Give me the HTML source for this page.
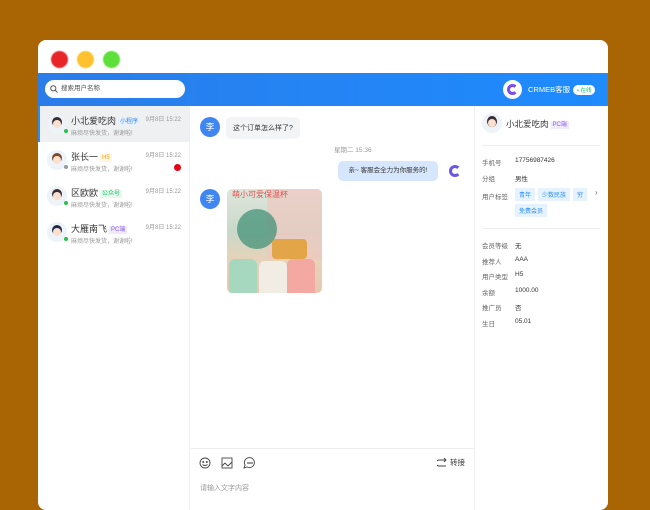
<!DOCTYPE html>
<html><head><meta charset="utf-8"><style>
*{margin:0;padding:0;box-sizing:border-box}
body{width:650px;height:500px;background:#a96503;font-family:"Liberation Sans","Noto Sans CJK SC",sans-serif;position:relative;overflow:hidden;font-size:7px;color:#333}
.win{position:absolute;left:38px;top:40px;width:570px;height:470px;background:#fff;border-radius:8px;overflow:hidden}
.dot{position:absolute;top:11px;width:17px;height:17px;border-radius:50%;filter:blur(.6px)}
.hdr{position:absolute;left:0;top:33px;width:570px;height:33px;background:linear-gradient(90deg,#2a7de9,#1e8bff)}
.search{position:absolute;left:7px;top:7px;width:140px;height:18px;background:#fff;border-radius:9px;font-size:6.5px;color:#555;padding-left:16px;line-height:18px}
.side{position:absolute;left:0;top:66px;width:152px;height:410px;border-right:1px solid #eee}
.item{position:relative;height:36px}
.item.act{background:#eff0f2;border-left:2px solid #2d8cf0}
.av{position:absolute;left:9px;top:8px;width:20px;height:20px;border-radius:50%;background:#eef3fa}
.av i{position:absolute;left:5px;top:3px;width:10px;height:10px;border-radius:50%;background:#3a2f33}
.av b{position:absolute;left:6px;top:6px;width:8px;height:8px;border-radius:50%;background:#fbe0cf}
.av s{position:absolute;right:-1px;bottom:1px;width:4px;height:4px;border-radius:50%;background:#27c24c}
.nm{position:absolute;left:33px;top:8px;font-size:9px;color:#333}
.tg{font-size:6px;padding:1px 2px;margin-left:2px;vertical-align:1px}
.ms{position:absolute;left:33px;top:22px;font-size:6px;color:#999}
.tm{position:absolute;right:8px;top:8px;font-size:6px;color:#999}
.bd{position:absolute;right:8px;top:22px;width:7px;height:7px;border-radius:50%;background:#e60012}
.chat{position:absolute;left:153px;top:66px;width:283px;height:410px}
.li{position:absolute;width:20px;height:20px;border-radius:50%;background:#3f86f3;color:#fff;font-size:9px;text-align:center;line-height:20px}
.right{position:absolute;left:436px;top:66px;width:134px;height:410px;border-left:1px solid #eee}
.row{position:absolute;left:7px;font-size:6.5px;color:#666;width:125px;height:9px}
.row span{position:absolute;left:33px;top:0;color:#333;white-space:nowrap}
.lab{display:inline-block;background:#e6f3ff;color:#2d8cf0;font-size:6px;padding:2px 4px;margin-right:3px;font-style:normal}
</style></head><body>
<div class="win">
<div class="dot" style="left:13px;background:#e8262a"></div>
<div class="dot" style="left:39px;background:#fdc22d"></div>
<div class="dot" style="left:65px;background:#5ee03a"></div>
<div class="hdr">
<div class="search"><svg style="position:absolute;left:5px;top:5px" width="8" height="8" viewBox="0 0 8 8"><circle cx="3.3" cy="3.3" r="2.6" stroke="#555" fill="none"/><path d="M5.3 5.3L7.5 7.5" stroke="#555"/></svg>搜索用户名称</div>
<div style="position:absolute;left:465px;top:7px;width:19px;height:19px;border-radius:50%;background:#fff"><div style="position:absolute;left:4px;top:4px;width:11px;height:11px;border-radius:50%;border:3px solid #7a4dea;border-right-color:transparent"></div></div>
<div style="position:absolute;left:490px;top:11px;color:#fff;font-size:7.5px;white-space:nowrap">CRMEB客服</div>
<div style="position:absolute;left:535px;top:12px;background:#fff;color:#19be6b;font-size:5.5px;border-radius:5px;padding:1px 4px;white-space:nowrap">• 在线</div>
</div>
<div class="side">
<div class="item act"><div class="av" style="left:7px"><i></i><b></b><s></s></div><div class="nm" style="left:31px">小北爱吃肉<span class="tg" style="background:#e6f0ff;color:#2d8cf0">小程序</span></div><div class="ms" style="left:31px">麻烦尽快发货，谢谢啦!</div><div class="tm">9月8日 15:22</div></div>
<div class="item"><div class="av"><i style="background:#7a4a2a"></i><b></b><s style="background:#999"></s></div><div class="nm">张长一<span class="tg" style="background:#fff6e0;color:#f5a623">H5</span></div><div class="ms">麻烦尽快发货，谢谢啦!</div><div class="tm">9月8日 15:22</div><div class="bd"></div></div>
<div class="item"><div class="av"><i></i><b></b><s></s></div><div class="nm">区欧欧<span class="tg" style="background:#e6f9ec;color:#19be6b">公众号</span></div><div class="ms">麻烦尽快发货，谢谢啦!</div><div class="tm">9月8日 15:22</div></div>
<div class="item"><div class="av"><i style="background:#1d2a4a"></i><b></b><s></s></div><div class="nm">大雁南飞<span class="tg" style="background:#f0eaff;color:#8a5cf6">PC端</span></div><div class="ms">麻烦尽快发货，谢谢啦!</div><div class="tm">9月8日 15:22</div></div>
</div>
<div class="chat">
<div class="li" style="left:9px;top:11px">李</div>
<div style="position:absolute;left:35px;top:11px;background:#f3f4f6;border-radius:5px;padding:6px 7px;font-size:7px">这个订单怎么样了?</div>
<div style="position:absolute;left:143px;top:38px;font-size:6.5px;color:#999">星期二 15:36</div>
<div style="position:absolute;left:147px;top:55px;width:100px;height:20px;background:#d6e6fc;border-radius:5px;font-size:6.5px;line-height:20px;text-align:center">亲~ 客服会全力为你服务的!</div>
<div style="position:absolute;left:255px;top:56px;width:18px;height:18px;border-radius:50%;background:#fff"><div style="position:absolute;left:3px;top:3px;width:12px;height:12px;border-radius:50%;border:3px solid #6a56ea;border-right-color:transparent"></div></div>
<div class="li" style="left:9px;top:83px">李</div>
<div style="position:absolute;left:36px;top:83px;width:95px;height:104px;border-radius:5px;overflow:hidden;background:linear-gradient(180deg,#dfe6dc 0%,#c9d9c9 40%,#e8d2b8 70%,#e6c8b0 100%)">
<div style="position:absolute;left:40px;top:0;width:55px;height:70px;background:#f0c8c0;opacity:.7"></div>
<div style="position:absolute;left:10px;top:20px;width:40px;height:40px;background:#3a8d73;border-radius:50%;opacity:.7"></div>
<div style="position:absolute;left:45px;top:50px;width:35px;height:20px;background:#e2a548;border-radius:4px"></div>
<div style="position:absolute;left:2px;top:70px;width:28px;height:34px;background:#a6d8c0;border-radius:6px 6px 0 0"></div>
<div style="position:absolute;left:32px;top:72px;width:28px;height:32px;background:#f1ece4;border-radius:6px 6px 0 0"></div>
<div style="position:absolute;left:60px;top:70px;width:28px;height:34px;background:#f4a8a2;border-radius:6px 6px 0 0"></div>
<div style="position:absolute;left:5px;top:0;font-size:8px;color:#e05050">萌小可爱保温杯</div>
</div>
<div style="position:absolute;left:0;top:342px;width:283px;border-top:1px solid #eee"></div>
<svg style="position:absolute;left:8px;top:351px" width="60" height="12" viewBox="0 0 60 12" fill="none" stroke="#444" stroke-width=".9"><circle cx="6" cy="6" r="5"/><circle cx="4.2" cy="5" r=".5" fill="#444"/><circle cx="7.8" cy="5" r=".5" fill="#444"/><path d="M3.5 7.5Q6 9.5 8.5 7.5"/><rect x="23" y="1" width="10" height="10"/><path d="M23 9L26 6L29 9L33 5"/><path d="M45 11L46 8A5 5 0 1 1 48 10Z"/><circle cx="49" cy="6" r=".4" fill="#444"/><circle cx="51" cy="6" r=".4" fill="#444"/><circle cx="53" cy="6" r=".4" fill="#444"/></svg>
<svg style="position:absolute;left:246px;top:352px" width="10" height="10" viewBox="0 0 10 10" fill="none" stroke="#444" stroke-width=".9"><path d="M9 2H2A1.5 1.5 0 0 0 2 8H9M7 0L9 2L7 4"/></svg>
<div style="position:absolute;left:259px;top:351px;font-size:7.5px">转接</div>
<div style="position:absolute;left:9px;top:377px;font-size:7px;color:#999">请输入文字内容</div>
</div>
<div class="right">
<div style="position:absolute;left:7px;top:7px;width:20px;height:20px;border-radius:50%;background:#eef3fa"><div style="position:absolute;left:5px;top:3px;width:10px;height:11px;border-radius:50%;background:#3a2f33"></div><div style="position:absolute;left:6px;top:6px;width:8px;height:8px;border-radius:50%;background:#fbe0cf"></div></div>
<div style="position:absolute;left:31px;top:12px;font-size:8.5px">小北爱吃肉<span class="tg" style="background:#f0eaff;color:#8a5cf6">PC端</span></div>
<div style="position:absolute;left:7px;top:39px;width:118px;border-top:1px solid #eee"></div>
<div class="row" style="top:51px">手机号<span>17756987426</span></div>
<div class="row" style="top:67px">分组<span>男性</span></div>
<div class="row" style="top:85px">用户标签<span style="top:-3px"><i class="lab">青年</i><i class="lab">少数民族</i><i class="lab">穷</i></span></div>
<div style="position:absolute;left:120px;top:82px;font-size:8px;color:#666">›</div>
<div class="row" style="top:101px"><span style="top:-3px"><i class="lab">免费会员</i></span></div>
<div style="position:absolute;left:7px;top:122px;width:118px;border-top:1px solid #eee"></div>
<div class="row" style="top:134px">会员等级<span>无</span></div>
<div class="row" style="top:150px">推荐人<span>AAA</span></div>
<div class="row" style="top:165px">用户类型<span>H5</span></div>
<div class="row" style="top:181px">余额<span>1000.00</span></div>
<div class="row" style="top:196px">推广员<span>否</span></div>
<div class="row" style="top:212px">生日<span>05.01</span></div>
</div>
</div>
</body></html>
